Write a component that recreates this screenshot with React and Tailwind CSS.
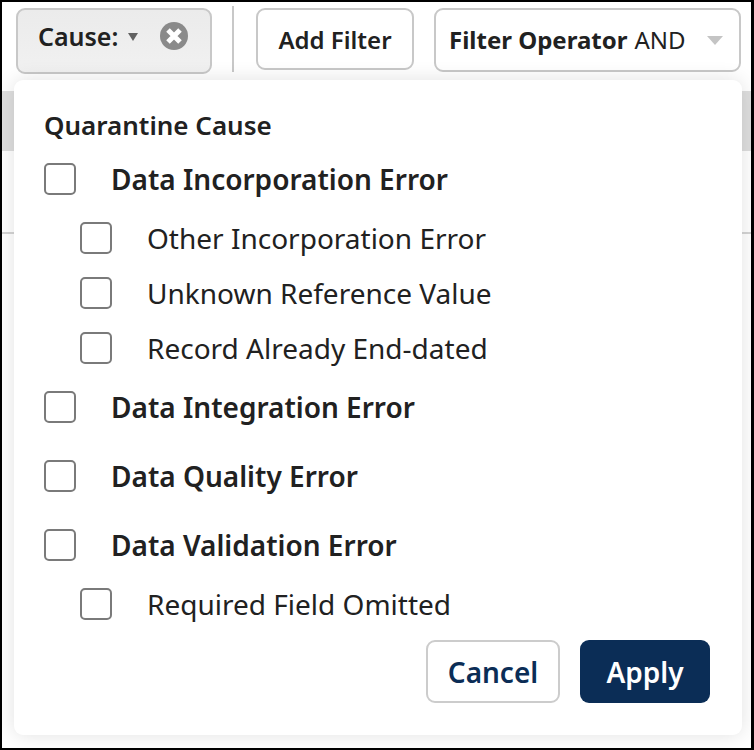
import React from 'react';

const Check = ({ child, big, label }) => (
    <div className={`flex items-center ${child ? 'pl-[36px]' : ''}`}>
        <span className="w-[32px] h-[32px] shrink-0 rounded-[5px] border-2 border-[#7a7a7a] bg-white"></span>
        <span className={`ml-[35px] text-[28px] leading-[32px] text-[#212121] ${big ? 'font-semibold' : ''}`}>{label}</span>
    </div>
);

export default function App() {
    return (
        <div className="relative w-[754px] h-[750px] overflow-hidden bg-white border-t-2 border-l-2 border-b-2 border-r-[3px] border-black font-['Noto_Sans',sans-serif]">
            {/* Toolbar */}
            <div className="flex items-start h-[78px] pt-[6px] pl-[14px] bg-white">
                <div className="flex items-start w-[196px] h-[66px] pl-[20px] pt-[10px] rounded-[9px] border-2 border-[#c8c8c8] bg-gradient-to-b from-[#ebebeb] to-[#f1f1f1]">
                    <span className="text-[25px] leading-[32px] font-semibold text-[#212121]">Cause:</span>
                    <svg className="ml-[10px] mt-[13px]" width="10" height="8" viewBox="0 0 10 8"><path d="M0 0h10L5 8z" fill="#616161" /></svg>
                    <svg className="ml-[22px] mt-[2px]" width="28" height="28" viewBox="0 0 28 28">
                        <circle cx="14" cy="14" r="14" fill="#8a8a8a" />
                        <path d="M8 8l12 12M20 8L8 20" stroke="#fff" strokeWidth="5" />
                    </svg>
                </div>
                <div className="w-[2px] h-[66px] ml-[20px] -mt-[2px] bg-[#c8c8c8]"></div>
                <div className="flex items-center justify-center w-[158px] h-[62px] ml-[22px] pt-[2px] rounded-[9px] border-2 border-[#c8c8c8] bg-white text-[24px] font-semibold text-[#212121]">Add Filter</div>
                <div className="flex items-center w-[307px] h-[64px] ml-[20px] pl-[13px] rounded-[9px] border-2 border-[#c8c8c8] bg-white text-[24px] text-[#212121]">
                    <span className="font-bold">Filter Operator</span>
                    <span className="ml-[7px]">AND</span>
                    <svg className="ml-[21px]" width="16" height="9" viewBox="0 0 16 9"><path d="M0 0h16L8 9z" fill="#c4c4c4" /></svg>
                </div>
            </div>

            {/* Page content behind the popover */}
            <div className="h-[60px] mt-[11px] bg-[#dedede]"></div>
            <div className="h-[2px] mt-[81px] bg-[#d4d4d4]"></div>

            {/* Popover */}
            <div className="absolute left-[12px] top-[78px] w-[728px] h-[655px] flex flex-col rounded-[9px] bg-white pl-[30px] pr-[32px] pt-[28px] shadow-[0_0_20px_rgba(0,0,0,0.12)]">
                <div className="text-[26px] leading-[34px] font-semibold text-[#212121]">Quarantine Cause</div>
                <div className="mt-[21px]"><Check big label="Data Incorporation Error" /></div>
                <div className="mt-[27px]"><Check child label="Other Incorporation Error" /></div>
                <div className="mt-[23px]"><Check child label="Unknown Reference Value" /></div>
                <div className="mt-[23px]"><Check child label="Record Already End-dated" /></div>
                <div className="mt-[27px]"><Check big label="Data Integration Error" /></div>
                <div className="mt-[37px]"><Check big label="Data Quality Error" /></div>
                <div className="mt-[37px]"><Check big label="Data Validation Error" /></div>
                <div className="mt-[27px]"><Check child label="Required Field Omitted" /></div>
                <div className="flex justify-end gap-[20px] mt-[20px]">
                    <button className="w-[134px] h-[63px] rounded-[9px] border-2 border-[#cccccc] bg-white text-[28px] font-semibold text-[#0b2d56]">Cancel</button>
                    <button className="w-[130px] h-[63px] rounded-[9px] bg-[#0b2d56] text-[28px] font-semibold text-white">Apply</button>
                </div>
            </div>
        </div>
    );
}
